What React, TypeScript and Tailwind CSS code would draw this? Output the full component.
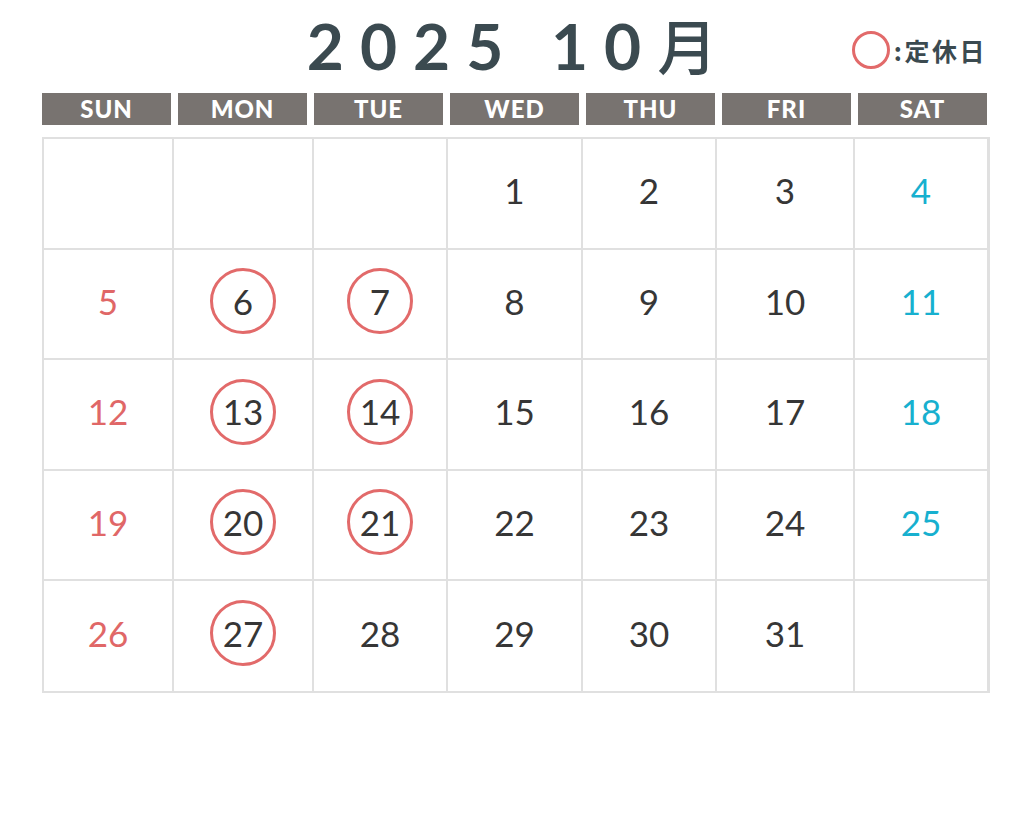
import React from "react";

const DAYS = ["SUN", "MON", "TUE", "WED", "THU", "FRI", "SAT"];
// closed days (定休日)
const HOLIDAYS = [6, 7, 13, 14, 20, 21, 27];

function buildWeeks() {
  const cells: (number | null)[] = [null, null, null];
  for (let d = 1; d <= 31; d++) cells.push(d);
  while (cells.length % 7) cells.push(null);
  const weeks: (number | null)[][] = [];
  for (let i = 0; i < cells.length; i += 7) weeks.push(cells.slice(i, i + 7));
  return weeks;
}

function DayCell({ day, col }: { day: number | null; col: number }) {
  const color =
    col === 0 ? "text-[#e06767]" : col === 6 ? "text-[#17b0cf]" : "text-[#363636]";
  const closed = day !== null && HOLIDAYS.includes(day);
  return (
    <div className="bg-white flex items-center justify-center pb-[6px]">
      {day !== null && (
        <div
          className={`w-[66px] h-[66px] rounded-full flex items-center justify-center ${
            closed ? "border-[3px] border-[#e26a6a]" : ""
          }`}
        >
          <span className={`text-[35px] leading-none ${color}`}>{day}</span>
        </div>
      )}
    </div>
  );
}

export default function App() {
  const weeks = buildWeeks();
  return (
    <div
      className="w-[1024px] h-[817px] bg-white px-[42px]"
      style={{ fontFamily: "Lato, 'Noto Sans', sans-serif" }}
    >
      <header className="grid grid-cols-[1fr_auto_1fr] items-center h-[93px] w-[948px]">
        <div />
        <h1 className="text-[64px] font-bold leading-[84px] tracking-[0.25em] text-[#3b4a50] pr-[8px] pb-[4px] whitespace-nowrap">
          2025 10
          <span
            className="tracking-normal font-medium text-[60px]"
            style={{ fontFamily: "'Noto Sans CJK JP', sans-serif" }}
          >
            月
          </span>
        </h1>
        <div className="flex items-center justify-end pr-[3px] pt-[6px]">
          <div className="w-[38px] h-[38px] rounded-full border-[3px] border-[#e26a6a]" />
          <span
            className="ml-[4px] text-[25px] font-bold text-[#3b4a50] leading-[32px] tracking-[2.5px]"
            style={{ fontFamily: "'Noto Sans CJK JP', sans-serif" }}
          >
            :定休日
          </span>
        </div>
      </header>

      <div className="grid grid-cols-7 gap-[7px] w-[945px]">
        {DAYS.map((d) => (
          <div
            key={d}
            className="h-[32px] bg-[#787370] flex items-center justify-center text-white text-[24px] font-black tracking-[0.04em] leading-none"
          >
            {d}
          </div>
        ))}
      </div>

      <div className="mt-[12px] grid grid-cols-[128px_138px_132px_133px_132px_136px_132px] grid-rows-[109px_108px_109px_108px_110px] gap-[2px] p-[2px] bg-[#e0e0e0] w-[948px]">
        {weeks.map((w, wi) =>
          w.map((day, ci) => <DayCell key={`${wi}-${ci}`} day={day} col={ci} />)
        )}
      </div>
    </div>
  );
}
